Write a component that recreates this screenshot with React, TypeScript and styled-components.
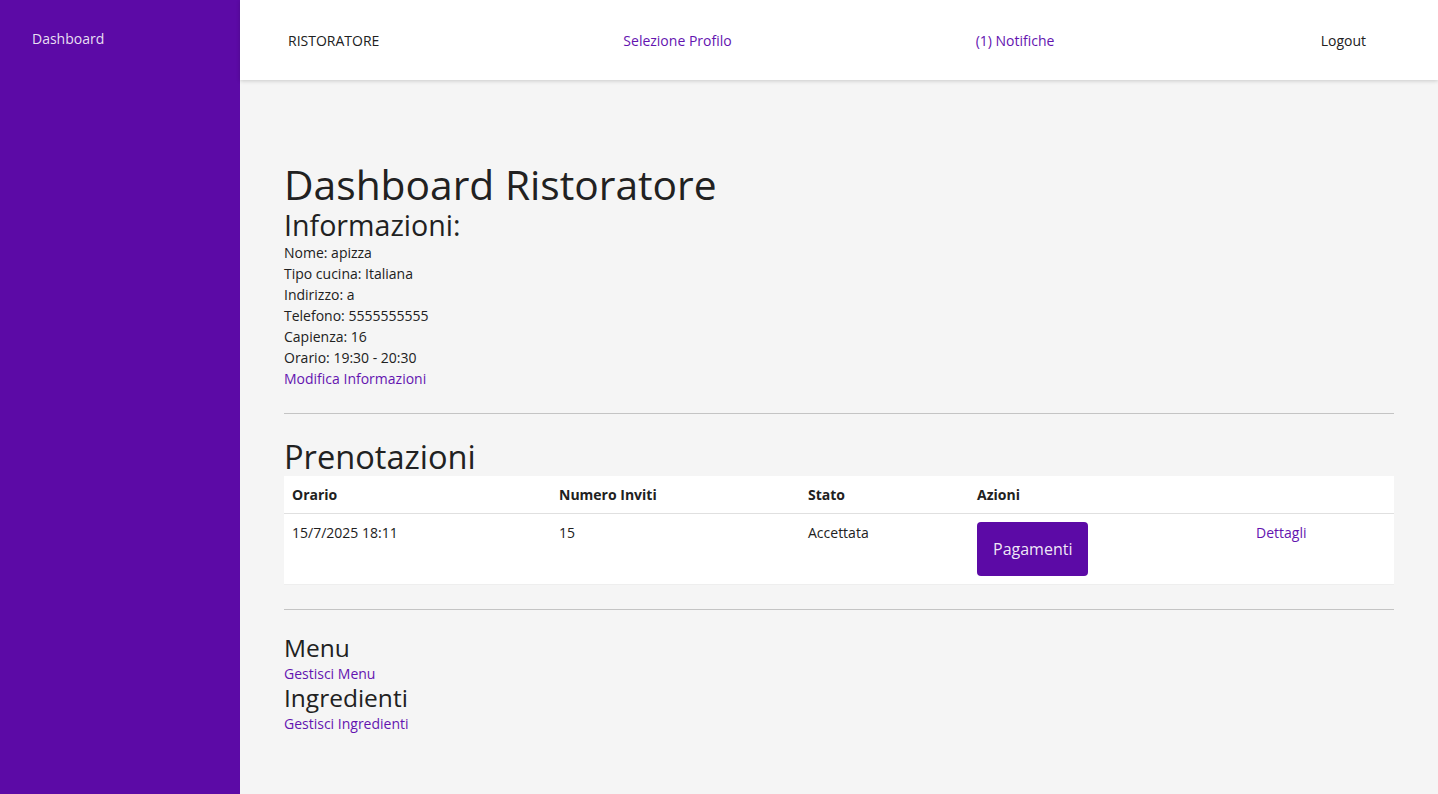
import React from "react";
import styled, { createGlobalStyle } from "styled-components";

const GlobalStyle = createGlobalStyle`
  html, body {
    margin: 0;
    padding: 0;
    background: #f5f5f5;
    font-family: "Open Sans", "Liberation Sans", sans-serif;
    color: #212121;
  }
  * { box-sizing: border-box; }
`;

const PURPLE = "#5c0aa6";
const LINK = "#6414b0";

const Layout = styled.div`
  display: flex;
  min-height: 794px;
`;

const Sidebar = styled.aside`
  width: 240px;
  flex: 0 0 240px;
  background: ${PURPLE};
  padding: 28px 32px;
`;

const SideLink = styled.a`
  display: block;
  color: rgba(255, 255, 255, 0.88);
  font-size: 14px;
  line-height: 21px;
  text-decoration: none;
`;

const Main = styled.div`
  flex: 1;
  display: flex;
  flex-direction: column;
  min-width: 0;
`;

const TopBar = styled.header`
  height: 80px;
  background: #ffffff;
  box-shadow: 0 1px 4px rgba(0, 0, 0, 0.18);
  display: flex;
  align-items: center;
  gap: 244px;
  padding: 1px 72px 0 48px;
  position: relative;
  z-index: 1;
`;

const TopItem = styled.a<{ $accent?: boolean; $end?: boolean }>`
  font-size: 14px;
  line-height: 21px;
  color: ${(p) => (p.$accent ? LINK : "#212121")};
  text-decoration: none;
  margin-left: ${(p) => (p.$end ? "auto" : "0")};
`;

const Content = styled.main`
  padding: 80px 44px 40px;
  display: flex;
  flex-direction: column;
`;

const Title = styled.h1`
  margin: 0;
  font-size: 40.75px;
  line-height: 48px;
  font-weight: 400;
`;

const SectionTitle = styled.h2<{ $size: number; $line: number }>`
  margin: 0;
  font-size: ${(p) => p.$size}px;
  line-height: ${(p) => p.$line}px;
  font-weight: 400;
`;

const InfoLine = styled.div`
  font-size: 14px;
  line-height: 21px;
`;

const TextLink = styled.a`
  display: block;
  font-size: 14px;
  line-height: 21px;
  color: ${LINK};
  text-decoration: none;
`;

const Divider = styled.hr`
  margin: 24px 0;
  border: none;
  border-top: 1px solid #c4c4c4;
  height: 0;
`;

const Table = styled.table`
  width: 100%;
  border-collapse: collapse;
  background: #ffffff;
  font-size: 14px;
  line-height: 21px;
  table-layout: fixed;
`;

const Th = styled.th`
  text-align: left;
  font-weight: 700;
  padding: 8px;
  border-bottom: 1px solid #e0e0e0;
`;

const Td = styled.td`
  padding: 8px;
  vertical-align: top;
  border-bottom: 1px solid #eeeeee;
`;

const Button = styled.button`
  background: ${PURPLE};
  color: rgba(255, 255, 255, 0.92);
  border: none;
  border-radius: 4px;
  padding: 16px;
  font-family: "Open Sans", "Liberation Sans", sans-serif;
  font-size: 16px;
  line-height: 22px;
  cursor: pointer;
`;

const TableLink = styled.a`
  color: ${LINK};
  text-decoration: none;
`;

const info = [
  "Nome: apizza",
  "Tipo cucina: Italiana",
  "Indirizzo: a",
  "Telefono: 5555555555",
  "Capienza: 16",
  "Orario: 19:30 - 20:30",
];

const colWidths = [267, 249, 169, 279, 146];

export default function App() {
  return (
    <>
      <GlobalStyle />
      <Layout>
        <Sidebar>
          <SideLink href="#">Dashboard</SideLink>
        </Sidebar>
        <Main>
          <TopBar>
            <TopItem>RISTORATORE</TopItem>
            <TopItem $accent href="#">Selezione Profilo</TopItem>
            <TopItem $accent href="#">(1) Notifiche</TopItem>
            <TopItem $end href="#">Logout</TopItem>
          </TopBar>
          <Content>
            <Title>Dashboard Ristoratore</Title>
            <SectionTitle $size={28.6} $line={33.6}>Informazioni:</SectionTitle>
            {info.map((l) => (
              <InfoLine key={l}>{l}</InfoLine>
            ))}
            <TextLink href="#">Modifica Informazioni</TextLink>
            <Divider />
            <SectionTitle $size={32.6} $line={38.4}>Prenotazioni</SectionTitle>
            <Table>
              <colgroup>
                {colWidths.map((w, i) => (
                  <col key={i} style={{ width: `${w}px` }} />
                ))}
              </colgroup>
              <thead>
                <tr>
                  <Th>Orario</Th>
                  <Th>Numero Inviti</Th>
                  <Th>Stato</Th>
                  <Th>Azioni</Th>
                  <Th></Th>
                </tr>
              </thead>
              <tbody>
                <tr>
                  <Td>15/7/2025 18:11</Td>
                  <Td>15</Td>
                  <Td>Accettata</Td>
                  <Td>
                    <Button>Pagamenti</Button>
                  </Td>
                  <Td>
                    <TableLink href="#">Dettagli</TableLink>
                  </Td>
                </tr>
              </tbody>
            </Table>
            <Divider />
            <SectionTitle $size={24.5} $line={28.8}>Menu</SectionTitle>
            <TextLink href="#">Gestisci Menu</TextLink>
            <SectionTitle $size={24.5} $line={28.8}>Ingredienti</SectionTitle>
            <TextLink href="#">Gestisci Ingredienti</TextLink>
          </Content>
        </Main>
      </Layout>
    </>
  );
}
